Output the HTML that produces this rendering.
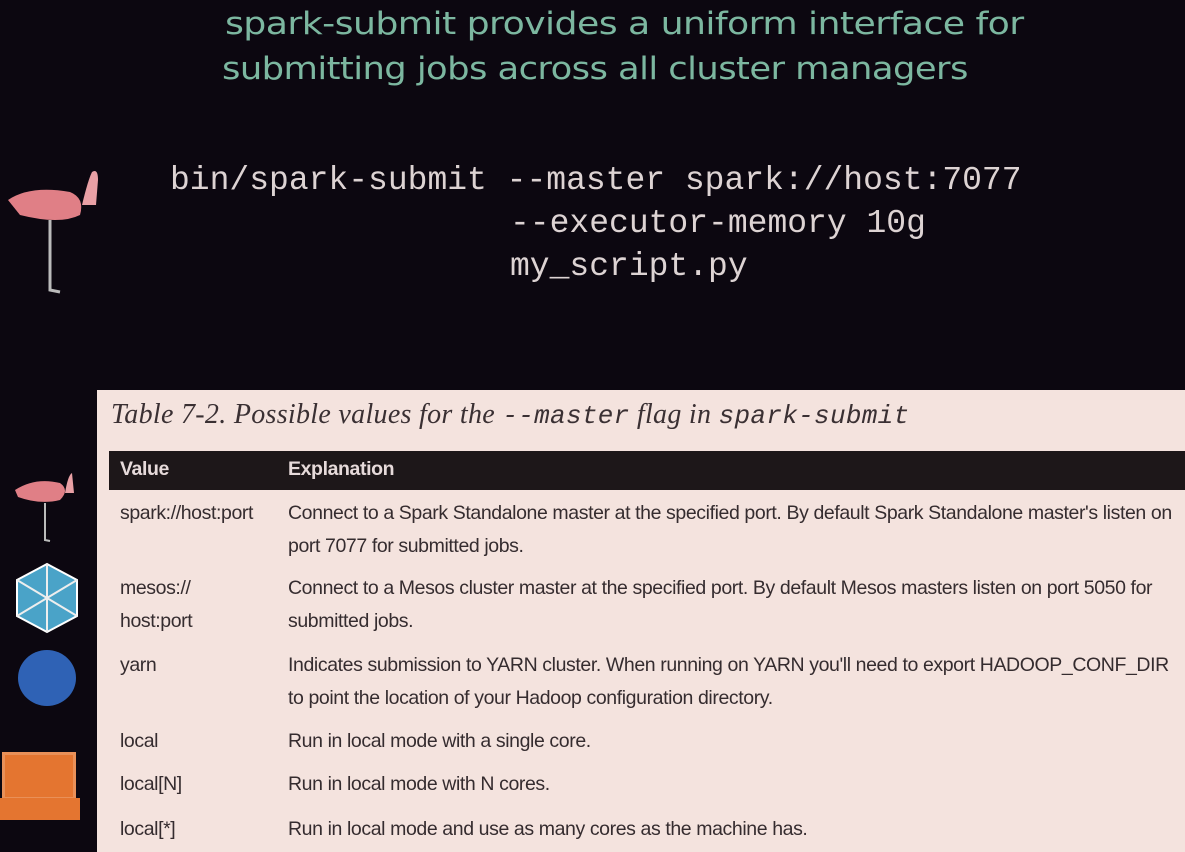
<!DOCTYPE html><html><head><style>
body{margin:0;width:1185px;height:852px;background:#0c0710;overflow:hidden;position:relative;font-family:"Liberation Sans",sans-serif}
.t{position:absolute;white-space:nowrap}
.g{color:#7cb7a0;font-size:31px;font-family:"DejaVu Sans","Liberation Sans",sans-serif;letter-spacing:-0.5px;transform-origin:left top}
.m{color:#ddd3d3;font-family:"Liberation Mono",monospace;font-size:33px}
#panel{position:absolute;left:97px;top:390px;width:1088px;height:462px;background:#f4e3de}
.c{position:absolute;color:#352c2f;font-family:"Liberation Sans Narrow","Liberation Sans",sans-serif;font-size:19.5px;letter-spacing:-0.4px;white-space:nowrap}
</style></head><body>
<div class="t g" style="left:225px;top:6px;transform:scaleX(1.17)">spark-submit provides a uniform interface for</div>
<div class="t g" style="left:222px;top:51px;transform:scaleX(1.14)">submitting jobs across all cluster managers</div>
<div class="t m" style="left:170px;top:162px">bin/spark-submit --master spark://host:7077</div>
<div class="t m" style="left:510px;top:205px">--executor-memory 10g</div>
<div class="t m" style="left:510px;top:248px">my_script.py</div>
<svg style="position:absolute;left:0;top:160px" width="110" height="140"><path d="M8 40 Q30 25 70 32 Q85 38 80 55 Q60 65 20 55 Z" fill="#e07f86"/><path d="M82 45 Q88 20 92 12 Q98 8 98 20 L96 45" fill="#e9a0a5"/><path d="M50 60 L50 130 L60 132" stroke="#bbb" stroke-width="3" fill="none"/></svg>
<svg style="position:absolute;left:10px;top:465px" width="65" height="80"><path d="M5 25 Q25 12 50 18 Q60 25 50 35 Q30 40 8 32 Z" fill="#e07f86"/><path d="M55 28 Q58 10 62 8 L64 28" fill="#e9a0a5"/><path d="M35 38 L35 75 L40 76" stroke="#bbb" stroke-width="2" fill="none"/></svg>
<svg style="position:absolute;left:14px;top:562px" width="66" height="72"><polygon points="33,2 63,18 63,54 33,70 3,54 3,18" fill="#4aa3c8" stroke="#fff" stroke-width="2"/><path d="M33 2V70M3 18L63 54M63 18L3 54" stroke="#eee" stroke-width="2"/></svg>
<div style="position:absolute;left:18px;top:650px;width:58px;height:56px;border-radius:50%;background:#2f62b5"></div>
<div style="position:absolute;left:2px;top:752px;width:68px;height:42px;background:#e47530;border:3px solid #e99058"></div>
<div style="position:absolute;left:0;top:798px;width:80px;height:22px;background:#e47530"></div>
<div id="panel">
<div class="t" style="left:14px;top:9px;font-family:'Liberation Serif',serif;font-style:italic;font-size:28px;color:#3a3033;letter-spacing:0.3px">Table 7-2. Possible values for the <span style="font-family:'Liberation Mono',monospace;font-size:26px">--master</span> flag in <span style="font-family:'Liberation Mono',monospace;font-size:26px">spark-submit</span></div>
<div style="position:absolute;left:12px;top:61px;width:1076px;height:39px;background:#1d1719"></div>
<div class="c" style="left:23px;top:68px;color:#e6dada;font-weight:bold">Value</div>
<div class="c" style="left:191px;top:68px;color:#e6dada;font-weight:bold">Explanation</div>
<div class="c" style="left:23px;top:112px">spark://host:port</div>
<div class="c" style="left:191px;top:112px">Connect to a Spark Standalone master at the specified port. By default Spark Standalone master's listen on</div>
<div class="c" style="left:191px;top:145px">port 7077 for submitted jobs.</div>
<div class="c" style="left:23px;top:187px">mesos://</div>
<div class="c" style="left:23px;top:220px">host:port</div>
<div class="c" style="left:191px;top:187px">Connect to a Mesos cluster master at the specified port. By default Mesos masters listen on port 5050 for</div>
<div class="c" style="left:191px;top:220px">submitted jobs.</div>
<div class="c" style="left:23px;top:264px">yarn</div>
<div class="c" style="left:191px;top:264px">Indicates submission to YARN cluster. When running on YARN you'll need to export HADOOP_CONF_DIR</div>
<div class="c" style="left:191px;top:297px">to point the location of your Hadoop configuration directory.</div>
<div class="c" style="left:23px;top:340px">local</div>
<div class="c" style="left:191px;top:340px">Run in local mode with a single core.</div>
<div class="c" style="left:23px;top:383px">local[N]</div>
<div class="c" style="left:191px;top:383px">Run in local mode with N cores.</div>
<div class="c" style="left:23px;top:428px">local[*]</div>
<div class="c" style="left:191px;top:428px">Run in local mode and use as many cores as the machine has.</div>
</div>
</body></html>
